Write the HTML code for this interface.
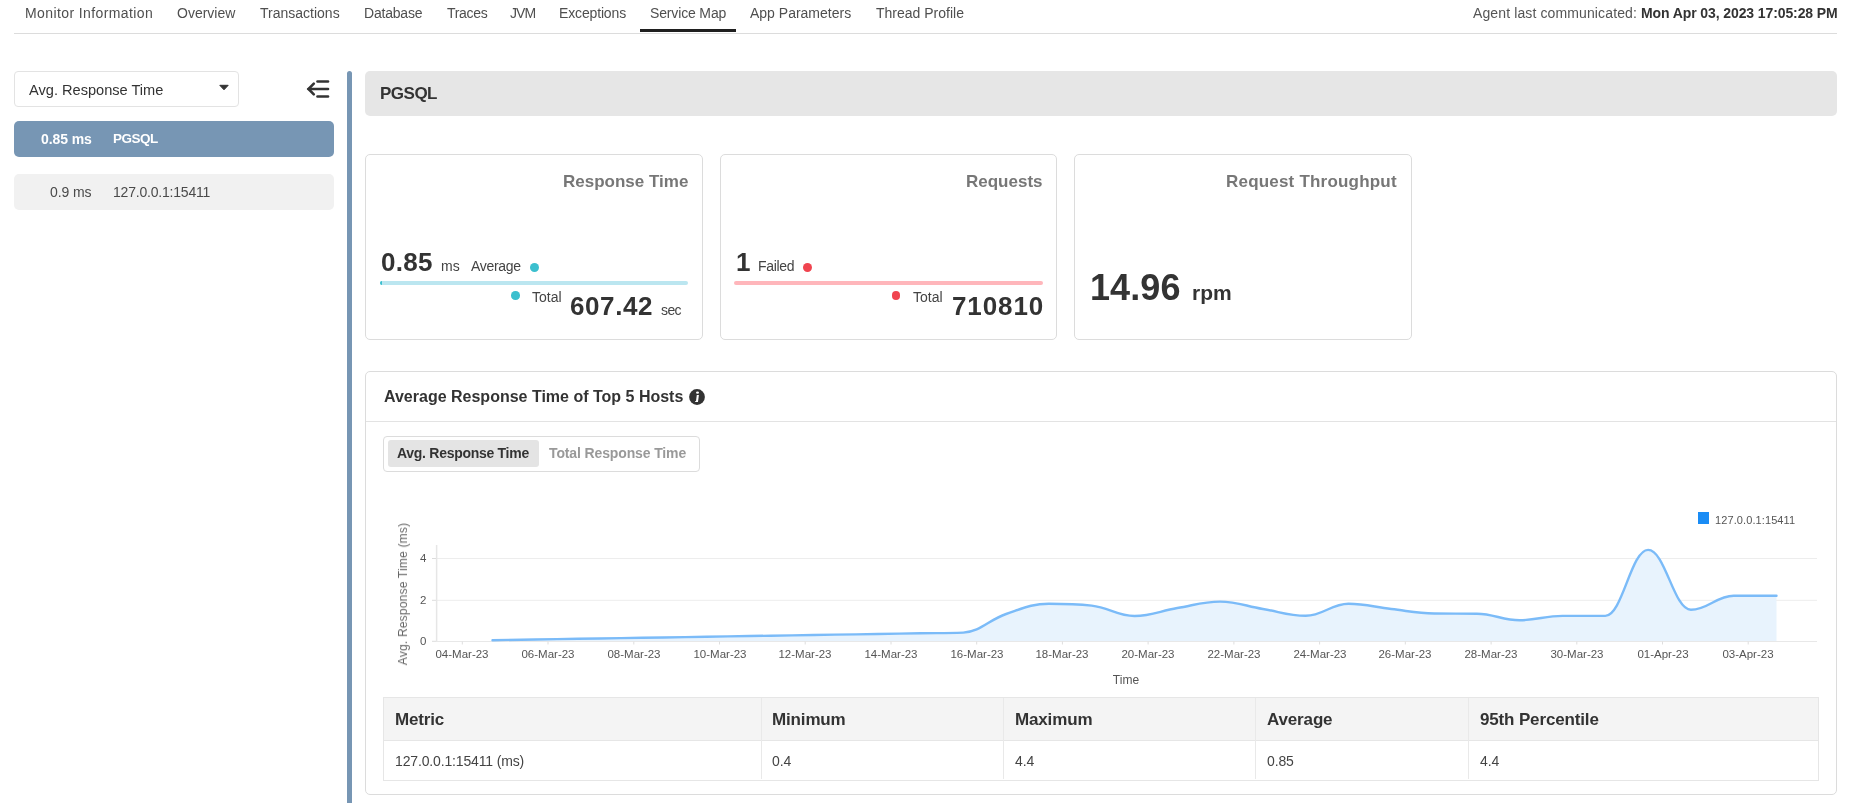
<!DOCTYPE html>
<html><head><meta charset="utf-8"><style>
html,body{-webkit-font-smoothing:antialiased;margin:0;padding:0;width:1852px;height:803px;overflow:hidden;background:#fff;position:relative;font-family:"Liberation Sans",sans-serif;}
.t{position:absolute;line-height:1;white-space:nowrap;will-change:transform;}
div{box-sizing:border-box;}
</style></head><body>
<div class="t" style="left:25.2px;top:6.15px;font-size:14px;font-weight:400;color:#4f4f4f;letter-spacing:0.4px;">Monitor Information</div>
<div class="t" style="left:177px;top:6.15px;font-size:14px;font-weight:400;color:#4f4f4f;">Overview</div>
<div class="t" style="left:260.2px;top:6.15px;font-size:14px;font-weight:400;color:#4f4f4f;">Transactions</div>
<div class="t" style="left:363.8px;top:6.15px;font-size:14px;font-weight:400;color:#4f4f4f;letter-spacing:-0.2px;">Database</div>
<div class="t" style="left:447px;top:6.15px;font-size:14px;font-weight:400;color:#4f4f4f;letter-spacing:-0.3px;">Traces</div>
<div class="t" style="left:509.6px;top:6.15px;font-size:14px;font-weight:400;color:#4f4f4f;letter-spacing:-0.9px;">JVM</div>
<div class="t" style="left:559px;top:6.15px;font-size:14px;font-weight:400;color:#4f4f4f;letter-spacing:-0.15px;">Exceptions</div>
<div class="t" style="left:650px;top:6.15px;font-size:14px;font-weight:400;color:#4f4f4f;letter-spacing:-0.15px;">Service Map</div>
<div class="t" style="left:749.8px;top:6.15px;font-size:14px;font-weight:400;color:#4f4f4f;">App Parameters</div>
<div class="t" style="left:875.5px;top:6.15px;font-size:14px;font-weight:400;color:#4f4f4f;">Thread Profile</div>
<div style="position:absolute;left:640px;top:29px;width:96px;height:3px;background:#1f1f1f;"></div>
<div style="position:absolute;left:14px;top:33px;width:1823px;height:1px;background:#dcdcdc;"></div>
<div class="t" style="right:14.5px;top:6.15px;font-size:14px;font-weight:400;color:#555;letter-spacing:0;"><span style="color:#555;letter-spacing:0.12px">Agent last communicated: </span><b style="color:#333;letter-spacing:-0.1px">Mon Apr 03, 2023 17:05:28 PM</b></div>
<div style="position:absolute;left:14px;top:71px;width:225px;height:36px;border:1px solid #e3e3e3;border-radius:4px;background:#fff;"></div>
<div class="t" style="left:29.3px;top:82.54px;font-size:14.6px;font-weight:400;color:#333;">Avg. Response Time</div>
<svg style="position:absolute;left:218px;top:84px" width="12" height="8"><path d="M1.8 1.3 L10.2 1.3 L6 5.8 Z" fill="#333" stroke="#333" stroke-width="1" stroke-linejoin="round"/></svg>
<svg style="position:absolute;left:305px;top:78px" width="28" height="22" viewBox="0 0 28 22"><g stroke="#333" stroke-width="2.6" stroke-linecap="round" fill="none"><path d="M8.8 5.6 L3.5 11 L8.8 16.4"/><path d="M3.5 11 L23 11"/><path d="M12.5 3.5 L23 3.5"/><path d="M12.5 18.5 L23 18.5"/></g></svg>
<div style="position:absolute;left:14px;top:121px;width:320px;height:36px;background:#7796b4;border-radius:5px;"></div>
<div class="t" style="right:1760px;top:131.85px;font-size:14px;font-weight:700;color:#fff;letter-spacing:-0.1px;">0.85 ms</div>
<div class="t" style="left:112.5px;top:132.27px;font-size:13.5px;font-weight:700;color:#fff;letter-spacing:-0.5px;">PGSQL</div>
<div style="position:absolute;left:14px;top:174px;width:320px;height:35.5px;background:#f1f1f1;border-radius:5px;"></div>
<div class="t" style="right:1760.4px;top:185.15px;font-size:14px;font-weight:400;color:#4a4a4a;letter-spacing:-0.1px;">0.9 ms</div>
<div class="t" style="left:113px;top:185.15px;font-size:14px;font-weight:400;color:#4a4a4a;letter-spacing:-0.2px;">127.0.0.1:15411</div>
<div style="position:absolute;left:347px;top:71px;width:5px;height:740px;background:#7796b4;border-radius:3px 3px 0 0;"></div>
<div style="position:absolute;left:365px;top:71px;width:1472px;height:45px;background:#e6e6e6;border-radius:5px;"></div>
<div class="t" style="left:380.2px;top:85.41px;font-size:17px;font-weight:700;color:#333;letter-spacing:-0.5px;">PGSQL</div>
<div style="position:absolute;left:365px;top:154px;width:338px;height:186px;border:1px solid #dcdcdc;border-radius:5px;background:#fff;"></div>
<div style="position:absolute;left:720px;top:154px;width:337px;height:186px;border:1px solid #dcdcdc;border-radius:5px;background:#fff;"></div>
<div style="position:absolute;left:1074px;top:154px;width:338px;height:186px;border:1px solid #dcdcdc;border-radius:5px;background:#fff;"></div>
<div class="t" style="right:1164px;top:172.81px;font-size:17px;font-weight:700;color:#777;">Response Time</div>
<div class="t" style="right:809.5999999999999px;top:172.81px;font-size:17px;font-weight:700;color:#777;">Requests</div>
<div class="t" style="right:455.29999999999995px;top:172.81px;font-size:17px;font-weight:700;color:#777;letter-spacing:0.2px;">Request Throughput</div>
<div class="t" style="left:380.6px;top:248.69px;font-size:26px;font-weight:700;color:#333;letter-spacing:0.3px;">0.85</div>
<div class="t" style="left:441.4px;top:258.85px;font-size:14px;font-weight:400;color:#444;">ms</div>
<div class="t" style="left:470.5px;top:258.85px;font-size:14px;font-weight:400;color:#444;letter-spacing:-0.3px;">Average</div>
<div style="position:absolute;left:529.9px;top:263.1px;width:9px;height:9px;background:#3bbfce;border-radius:50%;"></div>
<div style="position:absolute;left:380px;top:281px;width:308px;height:4px;background:#bbe6f0;border-radius:2px;"></div>
<div style="position:absolute;left:380px;top:281px;width:1.5px;height:4px;background:#3bbfce;border-radius:2px 0 0 2px;"></div>
<div style="position:absolute;left:511.2px;top:291.4px;width:8.6px;height:8.6px;background:#3bbfce;border-radius:50%;"></div>
<div class="t" style="left:532px;top:289.95px;font-size:14px;font-weight:400;color:#444;">Total</div>
<div class="t" style="left:570.1px;top:292.69px;font-size:26px;font-weight:700;color:#333;letter-spacing:0.6px;">607.42</div>
<div class="t" style="left:661.2px;top:302.85px;font-size:14px;font-weight:400;color:#444;letter-spacing:-0.6px;">sec</div>
<div class="t" style="left:736.4px;top:248.69px;font-size:26px;font-weight:700;color:#333;letter-spacing:-2px;">1</div>
<div class="t" style="left:757.5px;top:258.85px;font-size:14px;font-weight:400;color:#444;letter-spacing:-0.3px;">Failed</div>
<div style="position:absolute;left:802.8px;top:263.1px;width:9px;height:9px;background:#f0444f;border-radius:50%;"></div>
<div style="position:absolute;left:734.4px;top:281px;width:308.5px;height:4px;background:#ffb6bb;border-radius:2px;"></div>
<div style="position:absolute;left:891.9px;top:291.4px;width:8.6px;height:8.6px;background:#f0444f;border-radius:50%;"></div>
<div class="t" style="left:913px;top:289.95px;font-size:14px;font-weight:400;color:#444;">Total</div>
<div class="t" style="right:807.8px;top:292.69px;font-size:26px;font-weight:700;color:#333;letter-spacing:0.9px;">710810</div>
<div class="t" style="left:1089.5px;top:269.73px;font-size:36px;font-weight:700;color:#333;letter-spacing:0.1px;">14.96</div>
<div class="t" style="left:1191.7px;top:282.42px;font-size:21px;font-weight:700;color:#333;">rpm</div>
<div style="position:absolute;left:365px;top:371px;width:1472px;height:424px;border:1px solid #dcdcdc;border-radius:5px;background:#fff;"></div>
<div style="position:absolute;left:366px;top:421px;width:1470px;height:1px;background:#e3e3e3;"></div>
<div class="t" style="left:383.7px;top:389.36px;font-size:16px;font-weight:700;color:#333;">Average Response Time of Top 5 Hosts</div>
<svg style="position:absolute;left:688.9px;top:389.1px" width="16" height="16" viewBox="0 0 16 16"><circle cx="8" cy="8" r="7.9" fill="#333"/><ellipse cx="8.5" cy="3.7" rx="1.5" ry="1.15" fill="#fff"/><path d="M7.8 6.1 L9.9 6.1 L9.0 13.0 L6.0 13.0 L6.4 12.0 L7.0 12.0 Z" fill="#fff"/></svg>
<div style="position:absolute;left:383px;top:436px;width:317px;height:36px;border:1px solid #dcdcdc;border-radius:4px;background:#fff;"></div>
<div style="position:absolute;left:388px;top:440px;width:151px;height:27px;background:#e4e4e4;border-radius:3px;"></div>
<div class="t" style="left:397.3px;top:446.45px;font-size:14px;font-weight:700;color:#333;letter-spacing:-0.28px;">Avg. Response Time</div>
<div class="t" style="left:548.6px;top:446.45px;font-size:14px;font-weight:700;color:#999;letter-spacing:-0.13px;">Total Response Time</div>
<svg style="position:absolute;left:0;top:0" width="1852" height="803"><line x1="436" y1="558.5" x2="1817" y2="558.5" stroke="#ededed" stroke-width="1"/><line x1="436" y1="600.3" x2="1817" y2="600.3" stroke="#ededed" stroke-width="1"/><path d="M 492.50 640.20 C 492.50 640.20 518.18 639.79 535.30 639.51 C 552.42 639.23 560.98 639.09 578.10 638.82 C 595.22 638.54 603.78 638.40 620.90 638.13 C 638.02 637.85 646.58 637.71 663.70 637.44 C 680.82 637.16 689.38 637.02 706.50 636.75 C 723.62 636.47 732.18 636.33 749.30 636.05 C 766.42 635.78 774.98 635.64 792.10 635.36 C 809.22 635.09 817.78 634.95 834.90 634.67 C 852.02 634.40 860.58 634.26 877.70 633.98 C 894.82 633.71 903.38 633.57 920.50 633.29 C 937.62 633.01 946.18 633.29 963.30 632.60 C 980.42 631.91 988.98 619.76 1006.10 614.00 C 1023.22 608.24 1031.78 603.80 1048.90 603.80 C 1066.02 603.80 1074.58 603.80 1091.70 605.60 C 1108.82 607.40 1117.38 616.00 1134.50 616.00 C 1151.62 616.00 1160.18 610.88 1177.30 608.00 C 1194.42 605.12 1202.98 601.60 1220.10 601.60 C 1237.22 601.60 1245.78 606.16 1262.90 609.00 C 1280.02 611.84 1288.58 615.80 1305.70 615.80 C 1322.82 615.80 1331.38 603.70 1348.50 603.70 C 1365.62 603.70 1374.18 607.04 1391.30 609.00 C 1408.42 610.96 1416.98 613.30 1434.10 613.50 C 1451.22 613.70 1459.78 613.50 1476.90 613.70 C 1494.02 613.90 1502.58 620.20 1519.70 620.20 C 1536.82 620.20 1545.38 615.90 1562.50 615.90 C 1579.62 615.90 1588.18 615.90 1605.30 615.90 C 1622.42 615.90 1630.98 549.90 1648.10 549.90 C 1665.22 549.90 1673.78 609.80 1690.90 609.80 C 1708.02 609.80 1716.58 595.70 1733.70 595.70 C 1750.82 595.70 1776.50 595.70 1776.50 595.70 L 1776.50 641 L 492.50 641 Z" fill="#e8f3fd"/><line x1="436" y1="641.5" x2="1817" y2="641.5" stroke="#e8e8e8" stroke-width="1"/><line x1="436.6" y1="545" x2="436.6" y2="641.5" stroke="#e6e6e6" stroke-width="1.5"/><line x1="432" y1="558.5" x2="436" y2="558.5" stroke="#dcdcdc" stroke-width="1"/><line x1="432" y1="600.3" x2="436" y2="600.3" stroke="#dcdcdc" stroke-width="1"/><line x1="432" y1="641.3" x2="436" y2="641.3" stroke="#dcdcdc" stroke-width="1"/><line x1="462.3" y1="641.5" x2="462.3" y2="644.5" stroke="#dedede" stroke-width="1"/><line x1="548.0" y1="641.5" x2="548.0" y2="644.5" stroke="#dedede" stroke-width="1"/><line x1="633.8" y1="641.5" x2="633.8" y2="644.5" stroke="#dedede" stroke-width="1"/><line x1="719.5" y1="641.5" x2="719.5" y2="644.5" stroke="#dedede" stroke-width="1"/><line x1="805.2" y1="641.5" x2="805.2" y2="644.5" stroke="#dedede" stroke-width="1"/><line x1="891.0" y1="641.5" x2="891.0" y2="644.5" stroke="#dedede" stroke-width="1"/><line x1="976.7" y1="641.5" x2="976.7" y2="644.5" stroke="#dedede" stroke-width="1"/><line x1="1062.4" y1="641.5" x2="1062.4" y2="644.5" stroke="#dedede" stroke-width="1"/><line x1="1148.1" y1="641.5" x2="1148.1" y2="644.5" stroke="#dedede" stroke-width="1"/><line x1="1233.9" y1="641.5" x2="1233.9" y2="644.5" stroke="#dedede" stroke-width="1"/><line x1="1319.6" y1="641.5" x2="1319.6" y2="644.5" stroke="#dedede" stroke-width="1"/><line x1="1405.3" y1="641.5" x2="1405.3" y2="644.5" stroke="#dedede" stroke-width="1"/><line x1="1491.1" y1="641.5" x2="1491.1" y2="644.5" stroke="#dedede" stroke-width="1"/><line x1="1576.8" y1="641.5" x2="1576.8" y2="644.5" stroke="#dedede" stroke-width="1"/><line x1="1662.5" y1="641.5" x2="1662.5" y2="644.5" stroke="#dedede" stroke-width="1"/><line x1="1748.2" y1="641.5" x2="1748.2" y2="644.5" stroke="#dedede" stroke-width="1"/><path d="M 492.50 640.20 C 492.50 640.20 518.18 639.79 535.30 639.51 C 552.42 639.23 560.98 639.09 578.10 638.82 C 595.22 638.54 603.78 638.40 620.90 638.13 C 638.02 637.85 646.58 637.71 663.70 637.44 C 680.82 637.16 689.38 637.02 706.50 636.75 C 723.62 636.47 732.18 636.33 749.30 636.05 C 766.42 635.78 774.98 635.64 792.10 635.36 C 809.22 635.09 817.78 634.95 834.90 634.67 C 852.02 634.40 860.58 634.26 877.70 633.98 C 894.82 633.71 903.38 633.57 920.50 633.29 C 937.62 633.01 946.18 633.29 963.30 632.60 C 980.42 631.91 988.98 619.76 1006.10 614.00 C 1023.22 608.24 1031.78 603.80 1048.90 603.80 C 1066.02 603.80 1074.58 603.80 1091.70 605.60 C 1108.82 607.40 1117.38 616.00 1134.50 616.00 C 1151.62 616.00 1160.18 610.88 1177.30 608.00 C 1194.42 605.12 1202.98 601.60 1220.10 601.60 C 1237.22 601.60 1245.78 606.16 1262.90 609.00 C 1280.02 611.84 1288.58 615.80 1305.70 615.80 C 1322.82 615.80 1331.38 603.70 1348.50 603.70 C 1365.62 603.70 1374.18 607.04 1391.30 609.00 C 1408.42 610.96 1416.98 613.30 1434.10 613.50 C 1451.22 613.70 1459.78 613.50 1476.90 613.70 C 1494.02 613.90 1502.58 620.20 1519.70 620.20 C 1536.82 620.20 1545.38 615.90 1562.50 615.90 C 1579.62 615.90 1588.18 615.90 1605.30 615.90 C 1622.42 615.90 1630.98 549.90 1648.10 549.90 C 1665.22 549.90 1673.78 609.80 1690.90 609.80 C 1708.02 609.80 1716.58 595.70 1733.70 595.70 C 1750.82 595.70 1776.50 595.70 1776.50 595.70" fill="none" stroke="#7bbbf8" stroke-width="2.4" stroke-linejoin="round" stroke-linecap="round"/></svg>
<div class="t" style="right:1425.5px;top:553.37px;font-size:11.5px;font-weight:400;color:#555;">4</div>
<div class="t" style="right:1425.5px;top:595.17px;font-size:11.5px;font-weight:400;color:#555;">2</div>
<div class="t" style="right:1425.5px;top:636.17px;font-size:11.5px;font-weight:400;color:#555;">0</div>
<div class="t" style="left:402.7px;top:593.5px;font-size:12px;color:#666;letter-spacing:0.2px;transform:translate(-50%,-50%) rotate(-90deg);white-space:nowrap;line-height:1">Avg. Response Time (ms)</div>
<div class="t" style="left:422.3px;width:80px;text-align:center;top:648.57px;font-size:11.5px;color:#555">04-Mar-23</div>
<div class="t" style="left:508.0px;width:80px;text-align:center;top:648.57px;font-size:11.5px;color:#555">06-Mar-23</div>
<div class="t" style="left:593.8px;width:80px;text-align:center;top:648.57px;font-size:11.5px;color:#555">08-Mar-23</div>
<div class="t" style="left:679.5px;width:80px;text-align:center;top:648.57px;font-size:11.5px;color:#555">10-Mar-23</div>
<div class="t" style="left:765.2px;width:80px;text-align:center;top:648.57px;font-size:11.5px;color:#555">12-Mar-23</div>
<div class="t" style="left:851.0px;width:80px;text-align:center;top:648.57px;font-size:11.5px;color:#555">14-Mar-23</div>
<div class="t" style="left:936.7px;width:80px;text-align:center;top:648.57px;font-size:11.5px;color:#555">16-Mar-23</div>
<div class="t" style="left:1022.4px;width:80px;text-align:center;top:648.57px;font-size:11.5px;color:#555">18-Mar-23</div>
<div class="t" style="left:1108.1px;width:80px;text-align:center;top:648.57px;font-size:11.5px;color:#555">20-Mar-23</div>
<div class="t" style="left:1193.9px;width:80px;text-align:center;top:648.57px;font-size:11.5px;color:#555">22-Mar-23</div>
<div class="t" style="left:1279.6px;width:80px;text-align:center;top:648.57px;font-size:11.5px;color:#555">24-Mar-23</div>
<div class="t" style="left:1365.3px;width:80px;text-align:center;top:648.57px;font-size:11.5px;color:#555">26-Mar-23</div>
<div class="t" style="left:1451.1px;width:80px;text-align:center;top:648.57px;font-size:11.5px;color:#555">28-Mar-23</div>
<div class="t" style="left:1536.8px;width:80px;text-align:center;top:648.57px;font-size:11.5px;color:#555">30-Mar-23</div>
<div class="t" style="left:1622.5px;width:80px;text-align:center;top:648.57px;font-size:11.5px;color:#555">01-Apr-23</div>
<div class="t" style="left:1708.2px;width:80px;text-align:center;top:648.57px;font-size:11.5px;color:#555">03-Apr-23</div>
<div class="t" style="left:1086px;width:80px;text-align:center;top:673.74px;font-size:12px;color:#555;letter-spacing:0.1px">Time</div>
<div style="position:absolute;left:1698px;top:512.3px;width:11px;height:11.3px;background:#1a8cf5;"></div>
<div class="t" style="left:1715.4px;top:515.19px;font-size:11px;font-weight:400;color:#555;letter-spacing:0.1px;">127.0.0.1:15411</div>
<div style="position:absolute;left:383px;top:697px;width:1436px;height:84px;border:1px solid #e6e6e6;box-sizing:border-box;background:#fff;"></div>
<div style="position:absolute;left:384px;top:698px;width:1434px;height:42px;background:#f4f4f4;"></div>
<div style="position:absolute;left:384px;top:740px;width:1434px;height:1px;background:#e6e6e6;"></div>
<div style="position:absolute;left:760.5px;top:698.3px;width:1px;height:81px;background:#e9e9e9;"></div>
<div style="position:absolute;left:1003.2px;top:698.3px;width:1px;height:81px;background:#e9e9e9;"></div>
<div style="position:absolute;left:1255.4px;top:698.3px;width:1px;height:81px;background:#e9e9e9;"></div>
<div style="position:absolute;left:1468.4px;top:698.3px;width:1px;height:81px;background:#e9e9e9;"></div>
<div class="t" style="left:395.2px;top:710.71px;font-size:17px;font-weight:700;color:#333;letter-spacing:-0.15px;">Metric</div>
<div class="t" style="left:395.2px;top:753.95px;font-size:14px;font-weight:400;color:#444;letter-spacing:-0.15px;">127.0.0.1:15411 (ms)</div>
<div class="t" style="left:771.9px;top:710.71px;font-size:17px;font-weight:700;color:#333;letter-spacing:-0.15px;">Minimum</div>
<div class="t" style="left:771.9px;top:753.95px;font-size:14px;font-weight:400;color:#444;letter-spacing:-0.15px;">0.4</div>
<div class="t" style="left:1014.8px;top:710.71px;font-size:17px;font-weight:700;color:#333;letter-spacing:-0.15px;">Maximum</div>
<div class="t" style="left:1014.8px;top:753.95px;font-size:14px;font-weight:400;color:#444;letter-spacing:-0.15px;">4.4</div>
<div class="t" style="left:1266.7px;top:710.71px;font-size:17px;font-weight:700;color:#333;letter-spacing:-0.15px;">Average</div>
<div class="t" style="left:1266.7px;top:753.95px;font-size:14px;font-weight:400;color:#444;letter-spacing:-0.15px;">0.85</div>
<div class="t" style="left:1479.5px;top:710.71px;font-size:17px;font-weight:700;color:#333;letter-spacing:-0.15px;">95th Percentile</div>
<div class="t" style="left:1479.5px;top:753.95px;font-size:14px;font-weight:400;color:#444;letter-spacing:-0.15px;">4.4</div>

</body></html>
